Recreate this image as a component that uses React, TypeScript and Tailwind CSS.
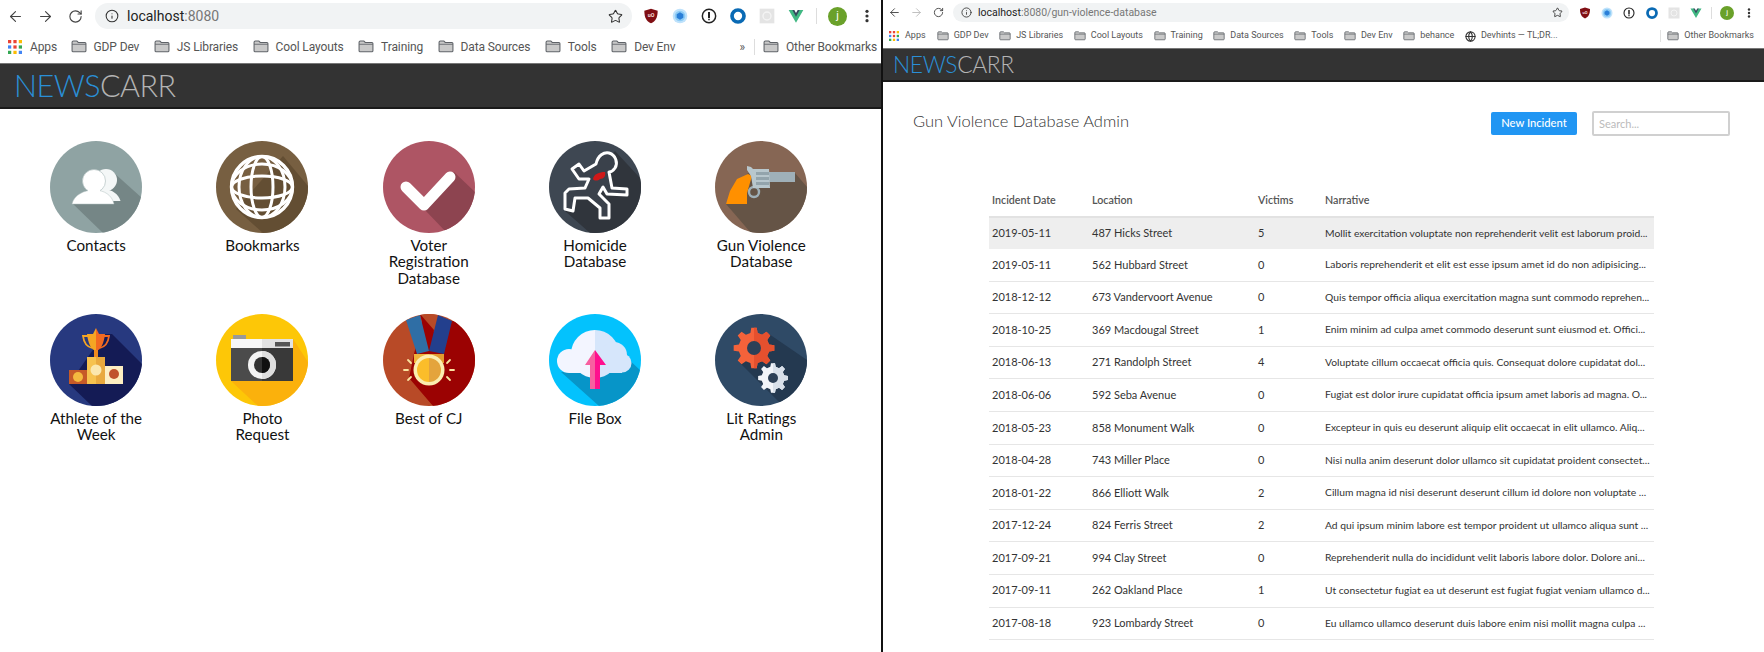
import React from "react";
import { ArrowLeft, ArrowRight, RotateCw, Info, Star, Globe } from "lucide-react";

const Folder = ({ w }: { w: number }) => (
  <svg width={w} height={w * 0.8} viewBox="0 0 15 12" className="shrink-0">
    <path d="M1 2.2 C1 1.3 1.5 1 2.2 1 H5.5 L6.8 2.3 H13 C13.7 2.3 14 2.7 14 3.3 V10 C14 10.7 13.6 11 13 11 H2 C1.4 11 1 10.7 1 10 Z" fill="#c9c9c9" stroke="#5f6368" strokeWidth="1" />
    <path d="M1 4 H14" stroke="#5f6368" strokeWidth="0.8" />
  </svg>
);

const AppsGrid = ({ s }: { s: number }) => {
  const c = ["#ea4335", "#ea4335", "#fbbc05", "#4285f4", "#ea4335", "#34a853", "#34a853", "#fbbc05", "#4285f4"];
  return (
    <svg width={s} height={s} viewBox="0 0 13 13" className="shrink-0">
      {c.map((f, i) => (
        <rect key={i} x={(i % 3) * 5} y={Math.floor(i / 3) * 5} width="3" height="3" fill={f} />
      ))}
    </svg>
  );
};

const UBlock = ({ s }: { s: number }) => (
  <svg width={s} height={s} viewBox="0 0 24 24">
    <path d="M12 1 L22 4 C22 14 19 20 12 23 C5 20 2 14 2 4 Z" fill="#800f14" />
    <text x="12" y="14" textAnchor="middle" fontSize="8" fontWeight="700" fill="#f4dede" fontFamily="Roboto, sans-serif">uO</text>
  </svg>
);
const Cube = ({ s }: { s: number }) => (
  <svg width={s} height={s} viewBox="0 0 24 24">
    <circle cx="12" cy="12" r="11" fill="#bfe2fb" />
    <circle cx="12" cy="12" r="8" fill="#8ccbf5" />
    <path d="M12 6.5 L17 9.5 V14.5 L12 17.5 L7 14.5 V9.5 Z" fill="#2a7fd8" />
  </svg>
);
const OnePass = ({ s }: { s: number }) => (
  <svg width={s} height={s} viewBox="0 0 24 24">
    <circle cx="12" cy="12" r="10" fill="#fff" stroke="#222" strokeWidth="2.2" />
    <path d="M12 6 V15" stroke="#222" strokeWidth="3" />
    <path d="M12 16 V18.5" stroke="#222" strokeWidth="2.4" />
  </svg>
);
const Ring = ({ s }: { s: number }) => (
  <svg width={s} height={s} viewBox="0 0 24 24">
    <circle cx="12" cy="12" r="9" fill="none" stroke="#0a6ab4" strokeWidth="5.5" />
  </svg>
);
const GreyBox = ({ s }: { s: number }) => (
  <svg width={s} height={s} viewBox="0 0 24 24">
    <rect x="1" y="1" width="22" height="22" fill="#e4e4e4" />
    <circle cx="12" cy="12" r="6" fill="none" stroke="#f4f4f4" strokeWidth="2" />
  </svg>
);
const Vue = ({ s }: { s: number }) => (
  <svg width={s} height={s} viewBox="0 0 24 24">
    <path d="M1 3 H8 L12 10 L16 3 H23 L12 22 Z" fill="#41b883" />
    <path d="M6.5 3 H9.5 L12 7.5 L14.5 3 H17.5 L12 13 Z" fill="#35495e" />
  </svg>
);
const Dots = ({ s }: { s: number }) => (
  <svg width={s} height={s} viewBox="0 0 24 24">
    <circle cx="12" cy="5" r="2.4" fill="#333" />
    <circle cx="12" cy="12" r="2.4" fill="#333" />
    <circle cx="12" cy="19" r="2.4" fill="#333" />
  </svg>
);

const exts = [UBlock, Cube, OnePass, Ring, GreyBox, Vue];

const Bookmark = ({ label, big }: { label: string; big: boolean }) =>
  big ? (
    <div className="flex items-center gap-[7px] shrink-0">
      <Folder w={16} />
      <span>{label}</span>
    </div>
  ) : (
    <div className="flex items-center gap-[5px] shrink-0">
      <Folder w={12} />
      <span>{label}</span>
    </div>
  );

const LeftChrome = () => (
  <div className="h-[63px] bg-white font-['Roboto',sans-serif] text-[#444]">
    <div className="flex h-[31px] pt-[3px]">
      <div className="flex items-center h-[26px]">
        <span className="w-[30px] flex justify-center"><ArrowLeft size={17} strokeWidth={1.6} color="#444" /></span>
        <span className="w-[30px] flex justify-center"><ArrowRight size={17} strokeWidth={1.6} color="#444" /></span>
        <span className="w-[30px] flex justify-center"><RotateCw size={15} strokeWidth={1.8} color="#444" /></span>
      </div>
      <div className="ml-[5px] flex-1 h-[26px] rounded-full bg-[#f1f3f4] flex items-center pl-[10px] pr-[9px]">
        <Info size={14} strokeWidth={1.8} color="#333" />
        <span className="ml-[8px] text-[14px] text-[#222]">localhost<span className="text-[#777]">:8080</span></span>
        <span className="flex-1" />
        <Star size={15} strokeWidth={1.7} color="#333" />
      </div>
      <div className="w-[249px] h-[26px] flex items-center pl-[5px]">
        {exts.map((E, i) => (
          <span key={i} className="w-[29.4px] flex justify-center"><E s={16} /></span>
        ))}
        <span className="mx-[6px] w-px h-[16px] bg-[#ddd]" />
        <span className="w-[29.4px] flex justify-center">
          <span className="w-[19px] h-[19px] rounded-full bg-[#6aa12a] text-white text-[11px] flex items-center justify-center">j</span>
        </span>
        <span className="w-[29.4px] flex justify-center"><Dots s={16} /></span>
      </div>
    </div>
    <div className="h-[31px] flex items-center pl-[8px] text-[12px] tracking-[-0.12px] text-[#555]">
      <div className="flex items-center gap-[8px] shrink-0">
        <AppsGrid s={14} />
        <span>Apps</span>
      </div>
      <div className="flex items-center gap-[14.5px] ml-[13.5px]">
        {["GDP Dev", "JS Libraries", "Cool Layouts", "Training", "Data Sources", "Tools", "Dev Env"].map((b) => (
          <Bookmark key={b} label={b} big />
        ))}
      </div>
      <span className="flex-1" />
      <span className="text-[12px]">»</span>
      <span className="ml-[9px] mr-[8px] w-px h-[16px] bg-[#ddd]" />
      <div className="pr-[4px]"><Bookmark label="Other Bookmarks" big /></div>
    </div>
  </div>
);

const RightChrome = () => (
  <div className="h-[48px] bg-white font-['Roboto',sans-serif] text-[#444]">
    <div className="flex h-[25px] pt-[3px]">
      <div className="flex items-center h-[19px]">
        <span className="w-[22px] flex justify-center"><ArrowLeft size={13} strokeWidth={1.7} color="#444" /></span>
        <span className="w-[22px] flex justify-center"><ArrowRight size={13} strokeWidth={1.7} color="#bbb" /></span>
        <span className="w-[22px] flex justify-center"><RotateCw size={11} strokeWidth={2} color="#444" /></span>
      </div>
      <div className="ml-[4px] flex-1 h-[19px] rounded-full bg-[#f1f3f4] flex items-center pl-[8px] pr-[6px]">
        <Info size={11} strokeWidth={1.8} color="#333" />
        <span className="ml-[6px] text-[10.5px] text-[#222]">localhost<span className="text-[#777]">:8080/gun-violence-database</span></span>
        <span className="flex-1" />
        <Star size={11} strokeWidth={1.9} color="#333" />
      </div>
      <div className="w-[195px] h-[19px] flex items-center pl-[5px]">
        {exts.map((E, i) => (
          <span key={i} className="w-[22.2px] flex justify-center"><E s={12} /></span>
        ))}
        <span className="mx-[4px] w-px h-[12px] bg-[#ddd]" />
        <span className="w-[22.2px] flex justify-center">
          <span className="w-[14px] h-[14px] rounded-full bg-[#6aa12a] text-white text-[8px] flex items-center justify-center">j</span>
        </span>
        <span className="w-[22.2px] flex justify-center"><Dots s={12} /></span>
      </div>
    </div>
    <div className="h-[22px] flex items-center pl-[6px] text-[9px] text-[#555]">
      <div className="flex items-center gap-[6px] shrink-0">
        <AppsGrid s={10} />
        <span>Apps</span>
      </div>
      <div className="flex items-center gap-[10.6px] ml-[11px]">
        {["GDP Dev", "JS Libraries", "Cool Layouts", "Training", "Data Sources", "Tools", "Dev Env", "behance"].map((b) => (
          <Bookmark key={b} label={b} big={false} />
        ))}
        <div className="flex items-center gap-[5px] shrink-0">
          <Globe size={11} strokeWidth={2.4} color="#333" />
          <span>Devhints — TL;DR...</span>
        </div>
      </div>
      <span className="flex-1" />
      <span className="mr-[6px] w-px h-[12px] bg-[#e2e2e2]" />
      <div className="pr-[10px]"><Bookmark label="Other Bookmarks" big={false} /></div>
    </div>
  </div>
);

const Badge = ({ id, bg, shadow, pts, children }: { id: string; bg: string; shadow: string; pts: string; children: React.ReactNode }) => (
  <svg width="92" height="92" viewBox="0 0 92 92" className="block">
    <defs>
      <clipPath id={id}><circle cx="46" cy="46" r="46" /></clipPath>
    </defs>
    <g clipPath={`url(#${id})`}>
      <rect width="92" height="92" fill={bg} />
      <polygon points={pts} fill={shadow} />
      {children}
    </g>
  </svg>
);

const gear = (cx: number, cy: number, ro: number, ri: number, n: number) => {
  const p: string[] = [];
  for (let i = 0; i < n; i++) {
    const a = (i / n) * Math.PI * 2 - Math.PI / 2;
    const st = (Math.PI * 2) / n;
    const pts: [number, number][] = [
      [a - st * 0.3, ri],
      [a - st * 0.17, ro],
      [a + st * 0.17, ro],
      [a + st * 0.3, ri],
    ];
    pts.forEach(([t, r]) => p.push(`${(cx + Math.cos(t) * r).toFixed(2)},${(cy + Math.sin(t) * r).toFixed(2)}`));
  }
  return p.join(" ");
};

const Contacts = () => (
  <Badge id="c1" bg="#8fa3a3" shadow="#758686" pts="22,62 53,92 92,92 92,57 63,31 44,45">
    <circle cx="56" cy="39" r="11" fill="#f4f7f7" />
    <path d="M50 49 C60 47 68 52 70.5 60 H50 Z" fill="#f4f7f7" />
    <circle cx="44" cy="40" r="11.5" fill="#fff" stroke="#b3c1c1" strokeWidth="0.7" />
    <path d="M22 63 C24 54 34 49 44 49 C54 49 62 54 64 63 Z" fill="#fff" stroke="#b3c1c1" strokeWidth="0.5" />
    <rect x="38" y="45" width="12" height="8" fill="#fff" />
  </Badge>
);

const Bookmarks = () => (
  <Badge id="c2" bg="#775f41" shadow="#634e33" pts="20,68 47,92 92,92 92,45 67,15">
    <g fill="none" stroke="#fff" strokeWidth="3">
      <circle cx="46" cy="46" r="30.5" strokeWidth="3.4" />
      <ellipse cx="46" cy="46" rx="11" ry="30.5" />
      <ellipse cx="46" cy="46" rx="23" ry="30.5" />
      <ellipse cx="46" cy="46" rx="30.5" ry="11" />
      <ellipse cx="46" cy="46" rx="30.5" ry="23" />
    </g>
  </Badge>
);

const Voter = () => (
  <Badge id="c3" bg="#ae5564" shadow="#8d4450" pts="41,68 64,92 92,92 92,51 71,31">
    <path d="M23 46 L41 64 L67 36" fill="none" stroke="#fff" strokeWidth="11" strokeLinecap="round" strokeLinejoin="round" />
  </Badge>
);

const Homicide = () => (
  <Badge id="c4" bg="#3e4752" shadow="#30353c" pts="16,70 41,92 92,92 92,38 66,10">
    <path
      d="M23 28 L30 23 L35 30 L47 23 C49 14 55 11 60 12 C67 14 69 22 66 27 C64 30 62 31 60 31 L63 47 L78 48 L78 54 L58 53 L54 46 L50 53 L60 63 L60 77 L51 77 L51 67 L39 57 L26 57 L24 70 L16 68 L16 52 L20 48 L36 47 L40 38 L30 38 Z"
      fill="#3a414b"
      stroke="#fff"
      strokeWidth="3"
      strokeLinejoin="round"
    />
    <path d="M44 38 C45 33 50 31 56 31 C57 35 55 38 51 38 C49 40 45 40 44 38 Z" fill="#d01818" />
  </Badge>
);

const Gun = () => (
  <Badge id="c5" bg="#866654" shadow="#655446" pts="11,63 36,92 92,92 92,46 80,32 33,32">
    <circle cx="39" cy="51" r="5" fill="none" stroke="#9fb0b8" strokeWidth="2.4" />
    <polygon points="11,63 32,63 32,52 37,35 33,33 22,38 15,50" fill="#ff9000" />
    <rect x="53" y="31" width="27" height="10" fill="#9fb0b8" />
    <polygon points="32,25 36,26 38,28 54,28 55,47 38,47 36,35 32,29" fill="#b8c7cd" />
    <rect x="41" y="31" width="13" height="3" fill="#93a4ac" />
    <rect x="41" y="36" width="13" height="3" fill="#93a4ac" />
    <rect x="41" y="41" width="13" height="3" fill="#93a4ac" />
  </Badge>
);

const Trophy = () => (
  <Badge id="c6" bg="#27397f" shadow="#141b55" pts="19,70 42,92 92,92 92,50 62,20 54,20">
    <path d="M38 22 H33 C34 30 38 33 42 34" fill="none" stroke="#f5a623" strokeWidth="1.8" />
    <path d="M54 22 H59 C58 30 54 33 50 34" fill="none" stroke="#f26a21" strokeWidth="1.8" />
    <polygon points="46,14 43,20 46,20" fill="#f5a623" />
    <polygon points="46,14 49,20 46,20" fill="#f26a21" />
    <path d="M37 20 H46 V37 C41 36 38 29 37 20 Z" fill="#f5a623" />
    <path d="M55 20 H46 V37 C51 36 54 29 55 20 Z" fill="#f26a21" />
    <rect x="44" y="36" width="4" height="7" fill="#f08a1e" />
    <rect x="37" y="43" width="9" height="27" fill="#f6c24f" />
    <rect x="46" y="43" width="9" height="27" fill="#e9a93e" />
    <rect x="19" y="56" width="18" height="14" fill="#c65a28" />
    <rect x="55" y="52" width="18" height="18" fill="#fdeec2" />
    <circle cx="46" cy="56" r="5.5" fill="#fbe7ae" />
    <circle cx="28" cy="63" r="5" fill="#f4b93f" />
    <circle cx="64" cy="60" r="5" fill="#c0522c" />
  </Badge>
);

const Camera = () => (
  <Badge id="c7" bg="#fdc707" shadow="#fbb10c" pts="15,67 42,92 92,92 92,48 77,25 60,25">
    <rect x="17" y="21" width="13" height="5" fill="#999" />
    <rect x="15" y="25" width="31" height="9" fill="#f6f6f6" />
    <rect x="46" y="25" width="31" height="9" fill="#e2e2e2" />
    <rect x="59" y="28" width="15" height="4.5" fill="#555" />
    <rect x="15" y="34" width="31" height="33" fill="#4b4b4b" />
    <rect x="46" y="34" width="31" height="33" fill="#393939" />
    <circle cx="46" cy="51" r="14" fill="#f4f4f4" />
    <path d="M46 37 A14 14 0 0 1 46 65 Z" fill="#dedede" />
    <circle cx="46" cy="51" r="8" fill="#333" />
    <path d="M46 43 A8 8 0 0 1 46 59 Z" fill="#111" />
  </Badge>
);

const Medal = () => (
  <Badge id="c8" bg="#b84a27" shadow="#9b0202" pts="31,40 40,4 46,20 69,7 92,10 92,92 50,92 26,64">
    <polygon points="37,0 55,0 51,16 46,14" fill="#b84a27" />
    <polygon points="37,0 46,36 51,16" fill="#9b0202" />
    <polygon points="23,6 37,1 46,37 34,40" fill="#2f6ea5" />
    <polygon points="55,1 69,7 61,40 46,37" fill="#233f8d" />
    <rect x="31" y="40" width="15" height="9" fill="#f0b33a" />
    <rect x="46" y="40" width="15" height="9" fill="#e29a2e" />
    <circle cx="46" cy="56" r="15.5" fill="#fbedb0" />
    <path d="M46 44 A12 12 0 0 0 46 68 Z" fill="#fbbd2a" />
    <path d="M46 44 A12 12 0 0 1 46 68 Z" fill="#e4a43c" />
    <g stroke="#fbe3a0" strokeWidth="1.8" strokeLinecap="round">
      <path d="M21 56 H25" />
      <path d="M67 56 H71" />
      <path d="M25 46 L28 49" />
      <path d="M67 46 L64 49" />
      <path d="M25 66 L28 63" />
      <path d="M64 63 L67 66" />
    </g>
  </Badge>
);

const CloudShape = () => (
  <>
    <circle cx="20" cy="47" r="12" />
    <circle cx="46" cy="40" r="24" />
    <circle cx="65" cy="41" r="13" />
    <circle cx="73" cy="49" r="9.5" />
    <rect x="20" y="44" width="53" height="15" />
  </>
);

const FileBox = () => (
  <Badge id="c9" bg="#03c2fd" shadow="#0795c8" pts="12,58 50,92 92,92 92,57 76,42 73,59">
    <defs>
      <clipPath id="cl"><rect x="0" y="0" width="46" height="92" /></clipPath>
      <clipPath id="cr"><rect x="46" y="0" width="46" height="92" /></clipPath>
    </defs>
    <g fill="#f3f5ff" clipPath="url(#cl)"><CloudShape /></g>
    <g fill="#d6e6fb" clipPath="url(#cr)"><CloudShape /></g>
    <polygon points="46,36 36,51 41,51 41,75 46,75" fill="#f85fa0" />
    <polygon points="46,36 57,51 51,51 51,75 46,75" fill="#ff0f8e" />
  </Badge>
);

const Gears = () => (
  <Badge id="c10" bg="#2f4a66" shadow="#243950" pts="24,48 68,92 92,92 92,46 54,20">
    <defs>
      <clipPath id="gr"><rect x="39" y="0" width="53" height="92" /></clipPath>
      <clipPath id="gs"><rect x="58" y="0" width="34" height="92" /></clipPath>
    </defs>
    <polygon points={gear(39, 34, 20.5, 15.5, 8)} fill="#f4623a" />
    <polygon points={gear(39, 34, 20.5, 15.5, 8)} fill="#e5502e" clipPath="url(#gr)" />
    <circle cx="39" cy="34" r="7" fill="#2c4057" />
    <polygon points={gear(58, 64, 15, 11.5, 8)} fill="#f1f4f9" />
    <polygon points={gear(58, 64, 15, 11.5, 8)} fill="#d8e0ea" clipPath="url(#gs)" />
    <circle cx="58" cy="64" r="5" fill="#2c4057" />
  </Badge>
);

const apps: { name: string; Icon: React.FC }[] = [
  { name: "Contacts", Icon: Contacts },
  { name: "Bookmarks", Icon: Bookmarks },
  { name: "Voter Registration Database", Icon: Voter },
  { name: "Homicide Database", Icon: Homicide },
  { name: "Gun Violence Database", Icon: Gun },
  { name: "Athlete of the Week", Icon: Trophy },
  { name: "Photo Request", Icon: Camera },
  { name: "Best of CJ", Icon: Medal },
  { name: "File Box", Icon: FileBox },
  { name: "Lit Ratings Admin", Icon: Gears },
];

const rows = [
  ["2019-05-11", "487 Hicks Street", "5", "Mollit exercitation voluptate non reprehenderit velit est laborum proid..."],
  ["2019-05-11", "562 Hubbard Street", "0", "Laboris reprehenderit et elit est esse ipsum amet id do non adipisicing..."],
  ["2018-12-12", "673 Vandervoort Avenue", "0", "Quis tempor officia aliqua exercitation magna sunt commodo reprehen..."],
  ["2018-10-25", "369 Macdougal Street", "1", "Enim minim ad culpa amet commodo deserunt sunt eiusmod et. Offici..."],
  ["2018-06-13", "271 Randolph Street", "4", "Voluptate cillum occaecat officia quis. Consequat dolore cupidatat dol..."],
  ["2018-06-06", "592 Seba Avenue", "0", "Fugiat est dolor irure cupidatat officia ipsum amet laboris ad magna. O..."],
  ["2018-05-23", "858 Monument Walk", "0", "Excepteur in quis eu deserunt aliquip elit occaecat in elit ullamco. Aliq..."],
  ["2018-04-28", "743 Miller Place", "0", "Nisi nulla anim deserunt dolor ullamco sit cupidatat proident consectet..."],
  ["2018-01-22", "866 Elliott Walk", "2", "Cillum magna id nisi deserunt deserunt cillum id dolore non voluptate ..."],
  ["2017-12-24", "824 Ferris Street", "2", "Ad qui ipsum minim labore est tempor proident ut ullamco aliqua sunt ..."],
  ["2017-09-21", "994 Clay Street", "0", "Reprehenderit nulla do incididunt velit laboris labore dolor. Dolore ani..."],
  ["2017-09-11", "262 Oakland Place", "1", "Ut consectetur fugiat ea ut deserunt est fugiat fugiat veniam ullamco d..."],
  ["2017-08-18", "923 Lombardy Street", "0", "Eu ullamco ullamco deserunt duis labore enim nisi mollit magna culpa ..."],
];

const colClass = "grid grid-cols-[100px_166px_67px_1fr]";

export default function App() {
  return (
    <div className="flex h-[652px] w-[1764px] overflow-hidden bg-white font-['Lato',sans-serif]">
      <div className="w-[881px] shrink-0">
        <LeftChrome />
        <header className="h-[45.5px] bg-[#333333] border-t border-[#777] border-b-2 border-b-[#1a1a1a] flex items-center pl-[14px] text-[30.5px] font-light tracking-[-0.5px] leading-none">
          <span className="text-[#2a8fd6]">NEWS</span>
          <span className="text-[#b4b4b4]">CARR</span>
        </header>
        <main className="pl-[13px] pt-[32.5px] grid grid-cols-[repeat(5,166.3px)] auto-rows-[173px]">
          {apps.map(({ name, Icon }) => (
            <a key={name} className="flex flex-col items-center">
              <Icon />
              <span className="mt-[3.5px] w-[92px] text-center text-[15.2px] leading-[16.8px] text-[#111]">{name}</span>
            </a>
          ))}
        </main>
      </div>
      <div className="w-[2px] shrink-0 bg-[#111]" />
      <div className="flex-1 min-w-0">
        <RightChrome />
        <header className="h-[34px] bg-[#333333] border-t border-[#777] border-b-2 border-b-[#1a1a1a] flex items-center pl-[10px] text-[22.8px] font-light tracking-[-0.4px] leading-none">
          <span className="text-[#2a8fd6]">NEWS</span>
          <span className="text-[#b4b4b4]">CARR</span>
        </header>
        <div className="flex items-center h-[28px] mt-[27px] pl-[30px] pr-[34px]">
          <h1 className="pb-[4px] text-[16.5px] font-light text-[#333]">Gun Violence Database Admin</h1>
          <span className="flex-1" />
          <button className="h-[23px] w-[86px] rounded-[2px] bg-[#2196f3] text-white text-[11.2px] font-medium leading-none">New Incident</button>
          <input
            placeholder="Search..."
            className="ml-[15px] h-[25px] w-[138px] rounded-[2px] border-2 border-[#d0d0d0] px-[5px] text-[11px] placeholder:text-[#bbb]"
          />
        </div>
        <div className="ml-[106px] w-[665px] mt-[48px] text-[11px] text-[#333]">
          <div className={`${colClass} h-[31px] items-center px-[3px] text-[10.7px] font-semibold text-[#555]`}>
            <span>Incident Date</span>
            <span>Location</span>
            <span>Victims</span>
            <span>Narrative</span>
          </div>
          {rows.map((r, i) => (
            <div
              key={i}
              className={
                i === 0
                  ? `${colClass} h-[33px] items-center px-[3px] bg-[#eeeeee] border-t-2 border-t-[#e2e2e2]`
                  : `${colClass} h-[32.6px] items-center px-[3px] border-b border-[#e6e6e6]`
              }
            >
              {r.map((c, j) => (
                <span key={j} className={j === 3 ? "whitespace-nowrap text-[10.3px]" : "whitespace-nowrap"}>{c}</span>
              ))}
            </div>
          ))}
        </div>
      </div>
    </div>
  );
}
